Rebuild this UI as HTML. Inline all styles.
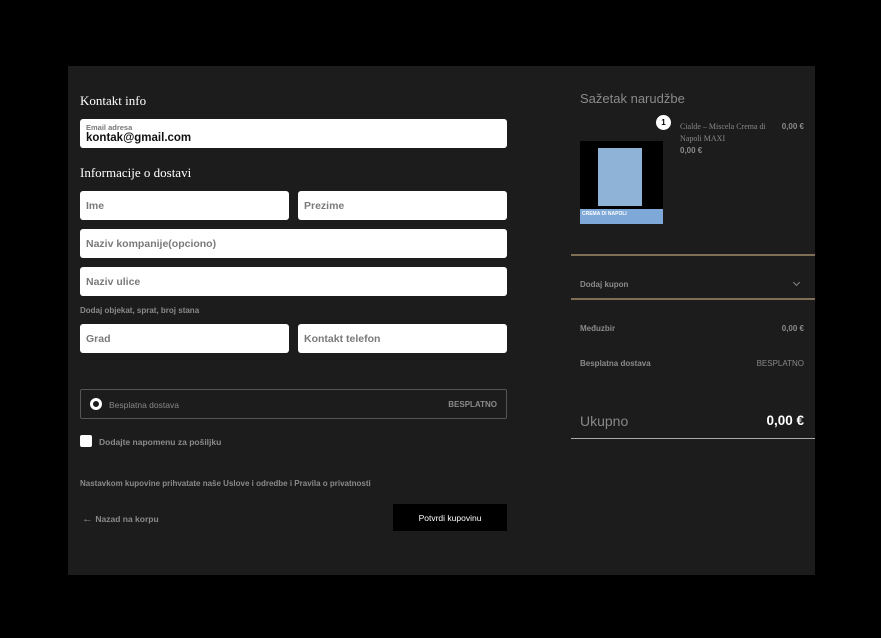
<!DOCTYPE html>
<html><head><meta charset="utf-8"><style>
*{margin:0;padding:0;box-sizing:border-box}
body{width:881px;height:638px;background:#000;position:relative;overflow:hidden;font-family:"Liberation Sans",sans-serif}
.p{position:absolute;left:68px;top:66px;width:747px;height:509px;background:#1c1c1c}
.a{position:absolute}
.f{position:absolute;background:#fff;border-radius:3px;color:#7a7a7a;font-weight:bold;font-size:10.5px;padding-left:6px;display:flex;align-items:center}
.s{font-family:"Liberation Serif",serif;color:#fff;font-size:13px}
.g{color:#8a8a8a;font-weight:bold;font-size:8px}
.r{text-align:right}
</style></head><body>
<div class="p"></div>
<div class="a s" style="left:80px;top:93px">Kontakt info</div>
<div class="f" style="left:80px;top:119px;width:427px;height:29px;display:block;padding-top:4px">
<div style="font-size:7.5px;color:#777">Email adresa</div><div style="font-size:11.5px;color:#111;margin-top:0px">kontak@gmail.com</div></div>
<div class="a s" style="left:80px;top:165px">Informacije o dostavi</div>
<div class="f" style="left:80px;top:191px;width:209px;height:29px">Ime</div>
<div class="f" style="left:298px;top:191px;width:209px;height:29px">Prezime</div>
<div class="f" style="left:80px;top:229px;width:427px;height:29px">Naziv kompanije(opciono)</div>
<div class="f" style="left:80px;top:267px;width:427px;height:29px">Naziv ulice</div>
<div class="a g" style="left:80px;top:306px">Dodaj objekat, sprat, broj stana</div>
<div class="f" style="left:80px;top:324px;width:209px;height:29px">Grad</div>
<div class="f" style="left:298px;top:324px;width:209px;height:29px">Kontakt telefon</div>
<div class="a" style="left:80px;top:389px;width:427px;height:30px;border:1px solid #555;border-radius:2px"></div>
<div class="a" style="left:90px;top:398px;width:12px;height:12px;border-radius:50%;border:3px solid #fff;background:#1c1c1c"></div>
<div class="a" style="left:109px;top:400px;color:#888;font-size:8.5px">Besplatna dostava</div>
<div class="a g r" style="left:400px;width:97px;top:400px">BESPLATNO</div>
<div class="a" style="left:80px;top:435px;width:12px;height:12px;background:#fff;border-radius:2px"></div>
<div class="a g" style="left:99px;top:437px;font-size:8.5px">Dodajte napomenu za pošiljku</div>
<div class="a g" style="left:80px;top:479px;font-size:8px">Nastavkom kupovine prihvatate naše Uslove i odredbe i Pravila o privatnosti</div>
<div class="a g" style="left:82px;top:513px;font-size:8.5px"><span style="font-weight:normal;font-size:11px">&larr;</span> Nazad na korpu</div>
<div class="a" style="left:393px;top:504px;width:114px;height:27px;background:#000;color:#fff;font-size:8.5px;display:flex;align-items:center;justify-content:center">Potvrdi kupovinu</div>

<div class="a" style="left:580px;top:91px;color:#8a8a8a;font-size:13px">Sažetak narudžbe</div>
<div class="a" style="left:580px;top:141px;width:83px;height:83px;background:#000"></div>
<div class="a" style="left:598px;top:148px;width:44px;height:58px;background:#8fb3d6"></div>
<div class="a" style="left:580px;top:209px;width:83px;height:15px;background:#7ea8d8;color:#fff;font-size:5px;font-weight:bold;padding:2px">CREMA DI NAPOLI</div>
<div class="a" style="left:656px;top:115px;width:15px;height:15px;border-radius:50%;background:#fff;color:#000;font-size:8px;font-weight:bold;text-align:center;line-height:15px">1</div>
<div class="a" style="left:680px;top:121px;width:92px;color:#888;font-family:'Liberation Serif',serif;font-size:8px;line-height:12px">Cialde – Miscela Crema di Napoli MAXI</div>
<div class="a g" style="left:680px;top:146px">0,00 €</div>
<div class="a g r" style="left:740px;width:64px;top:122px">0,00 €</div>
<div class="a" style="left:571px;top:254px;width:244px;height:2px;background:#7d6e55"></div>
<div class="a g" style="left:580px;top:280px">Dodaj kupon</div>
<div class="a" style="left:794px;top:280px;width:5px;height:5px;border-right:1px solid #888;border-bottom:1px solid #888;transform:rotate(45deg)"></div>
<div class="a" style="left:571px;top:298px;width:244px;height:2px;background:#7d6e55"></div>
<div class="a g" style="left:580px;top:324px">Međuzbir</div>
<div class="a g r" style="left:740px;width:64px;top:324px">0,00 €</div>
<div class="a g" style="left:580px;top:359px">Besplatna dostava</div>
<div class="a r" style="left:700px;width:104px;top:359px;color:#888;font-size:8px">BESPLATNO</div>
<div class="a" style="left:580px;top:413px;color:#888;font-size:14px">Ukupno</div>
<div class="a r" style="left:700px;width:104px;top:413px;color:#fff;font-size:13.5px;font-weight:bold">0,00 €</div>
<div class="a" style="left:571px;top:438px;width:244px;height:1px;background:#aaa"></div>
</body></html>
